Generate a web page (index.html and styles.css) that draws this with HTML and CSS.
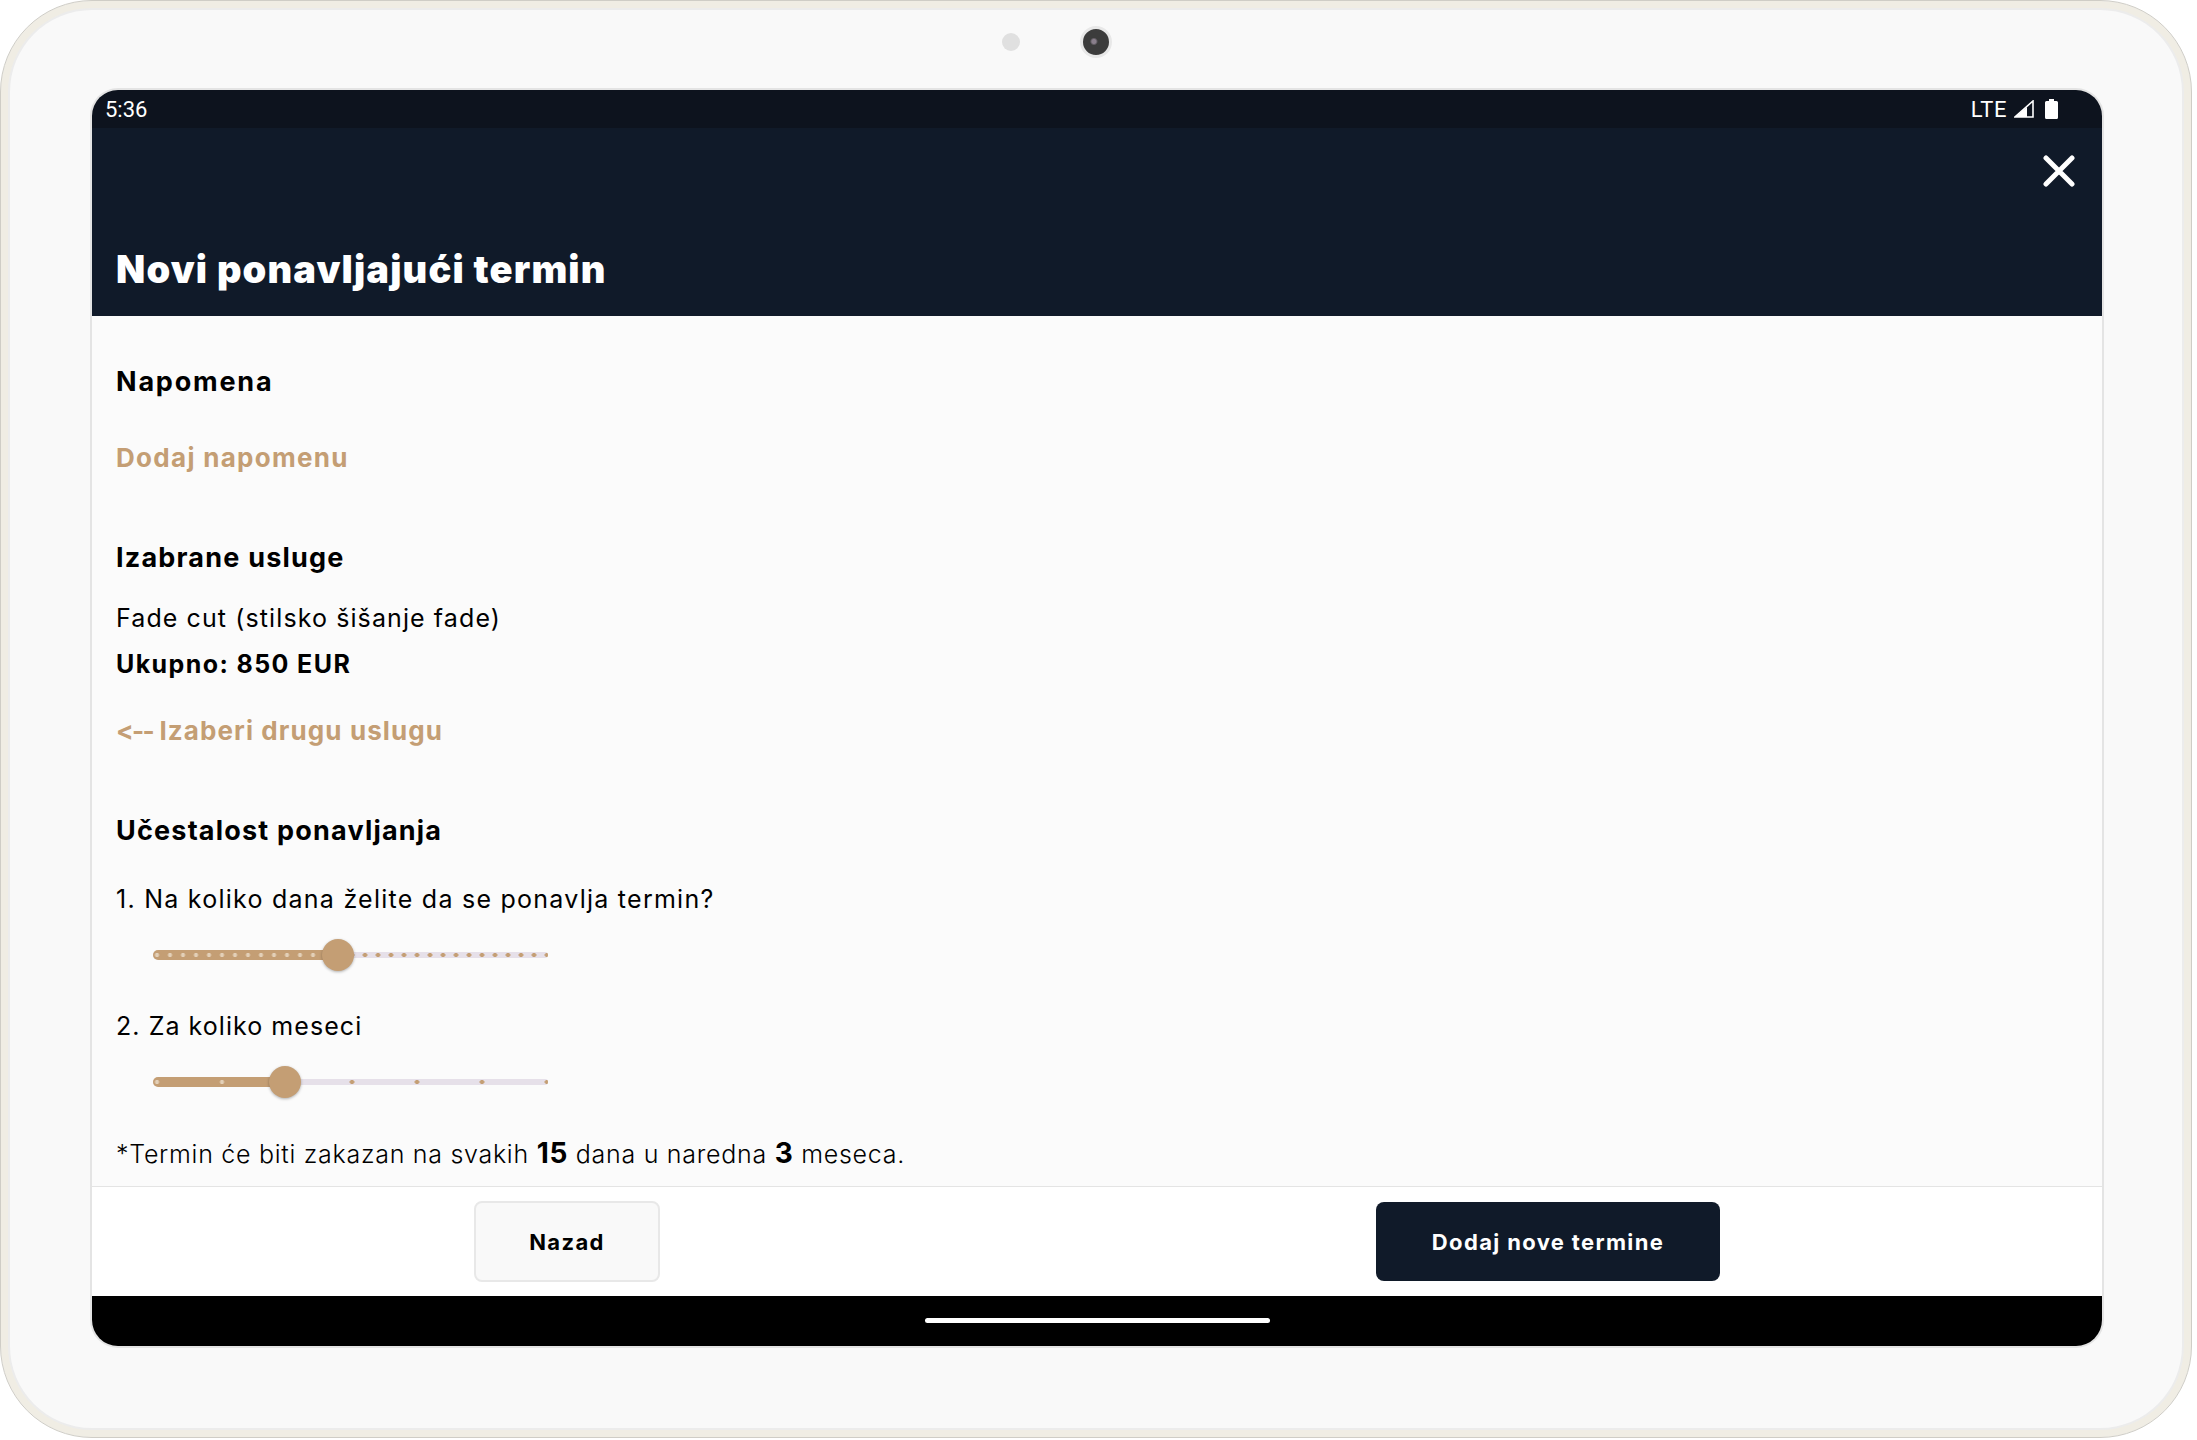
FILE: index.html
```html
<!DOCTYPE html>
<html lang="sr">
<head>
  <meta charset="UTF-8">
  <meta name="viewport" content="width=device-width, initial-scale=1.0">
  <title>Novi ponavljajući termin</title>
  <link rel="stylesheet" href="styles.css">
</head>
<body>
  <div class="device">
    <div class="cameras">
      <span class="sensor"></span>
      <span class="lens"></span>
    </div>
    <div class="screen">
      <div class="status-bar">
        <span class="clock">5:36</span>
        <div class="status-icons">
          <span class="lte">LTE</span>
          <svg class="signal" width="20" height="18" viewBox="0 0 20 18">
            <path d="M19 1v16H1z" fill="none" stroke="#fff" stroke-width="1.6"/>
            <path d="M13 7v10H1z" fill="#fff"/>
          </svg>
          <svg class="battery" width="13" height="20" viewBox="0 0 13 20">
            <path d="M4 0h5v2h2.500q1.500 0 1.500 1.500v15q0 1.500-1.500 1.500h-10q-1.500 0-1.500-1.500v-15q0-1.500 1.500-1.500h2.500z" fill="#fff"/>
          </svg>
        </div>
      </div>
      <header class="top-bar">
        <div class="close-row">
          <svg class="close" width="32" height="32" viewBox="0 0 32 32">
            <path d="M3 3l26 26M29 3l-26 26" stroke="#fff" stroke-width="5" stroke-linecap="round"/>
          </svg>
        </div>
        <h1 class="title">Novi ponavljajući termin</h1>
      </header>
      <main class="content">
        <h2 class="section-title first">Napomena</h2>
        <a class="link link-note">Dodaj napomenu</a>
        <h2 class="section-title">Izabrane usluge</h2>
        <p class="service">Fade cut (stilsko šišanje fade)</p>
        <p class="total">Ukupno: 850 EUR</p>
        <a class="link link-back"><span class="arrow">&lt;--</span> Izaberi drugu uslugu</a>
        <h2 class="section-title">Učestalost ponavljanja</h2>
        <p class="question q-first">1. Na koliko dana želite da se ponavlja termin?</p>
        <div class="slider slider-days">
          <div class="track-off"></div>
          <div class="track-on" style="width: 185px"></div>
          <span class="thumb" style="left: 185px"></span>
        </div>
        <p class="question">2. Za koliko meseci</p>
        <div class="slider slider-months">
          <div class="track-off"></div>
          <div class="track-on" style="width: 132px"></div>
          <span class="thumb" style="left: 132px"></span>
        </div>
        <p class="summary">*Termin će biti zakazan na svakih <strong>15</strong> dana u naredna <strong>3</strong> meseca.</p>
      </main>
      <footer class="actions">
        <button class="btn btn-back">Nazad</button>
        <button class="btn btn-add">Dodaj nove termine</button>
      </footer>
      <div class="nav-bar">
        <span class="home-pill"></span>
      </div>
    </div>
  </div>
</body>
</html>
```

FILE: styles.css
```css
* {
  margin: 0;
  padding: 0;
  box-sizing: border-box;
  font-family: Inter, "Liberation Sans", sans-serif;
  font-variant-ligatures: none;
  font-feature-settings: "calt" 0;
}

body {
  background-color: white;
}

.device {
  width: 2192px;
  height: 1438px;
  padding: 0 89px 91px 91px;
  display: flex;
  flex-direction: column;
  background-color: #f9f9f9;
  border: 1px solid #cfcdc6;
  border-radius: 92px;
  box-shadow: inset 0 0 0 7px #f0ede4, inset 0 0 0 9px #ececec;
}

.cameras {
  height: 89px;
  flex-shrink: 0;
  display: flex;
  align-items: center;
  padding: 0 0 7px 910px;
  gap: 60px;
}

.sensor {
  width: 18px;
  height: 18px;
  border-radius: 50%;
  background-color: #e0e0e0;
}

.lens {
  width: 32px;
  height: 32px;
  border-radius: 50%;
  background: radial-gradient(circle at 42% 48%, #8a7f8c 0 2px, #3c3c3c 4px 11px);
  border: 3px solid #e8e8e8;
}

.screen {
  flex: 1;
  display: flex;
  flex-direction: column;
  overflow: hidden;
  border-radius: 26px;
  background-color: #fbfbfb;
  box-shadow: 0 0 0 2px #e4e4e4;
}

.status-bar {
  height: 38px;
  flex-shrink: 0;
  display: flex;
  align-items: center;
  justify-content: space-between;
  padding: 0 44px 0 13px;
  background-color: #0d131e;
  color: white;
}

.clock, .lte {
  font-family: Roboto, sans-serif;
  font-size: 22px;
}

.lte {
  letter-spacing: 0.6px;
}

.status-icons {
  display: flex;
  align-items: center;
  gap: 7px;
}

.battery {
  margin-left: 4px;
}

.top-bar {
  height: 188px;
  flex-shrink: 0;
  padding: 0 24px;
  background-color: #101a29;
  color: white;
}

.close-row {
  display: flex;
  justify-content: flex-end;
  padding: 27px 3px 0 0;
}

.title {
  margin-top: 58px;
  font-size: 38px;
  line-height: 48px;
  font-weight: 900;
  letter-spacing: 1.15px;
}

.content {
  flex: 1;
  overflow: hidden;
  padding: 51px 24px 0;
  color: black;
}

.section-title {
  margin-top: 70px;
  font-size: 27px;
  line-height: 30px;
  font-weight: 700;
  letter-spacing: 1.2px;
}

.section-title.first {
  margin-top: 0;
  letter-spacing: 1.8px;
}

.link {
  display: block;
  font-size: 26px;
  line-height: 30px;
  font-weight: 700;
  letter-spacing: 1.3px;
  color: #c49e74;
}

.link-note {
  margin-top: 46px;
}

.link-back {
  margin-top: 37px;
  letter-spacing: 1.1px;
}

.arrow {
  letter-spacing: -1.6px;
  margin-right: -1px;
}

.service {
  margin-top: 30px;
  font-size: 25px;
  line-height: 30px;
  letter-spacing: 1.1px;
}

.total {
  margin-top: 16px;
  font-size: 25px;
  line-height: 30px;
  font-weight: 700;
  letter-spacing: 1.4px;
}

.question {
  margin-top: 40px;
  font-size: 25px;
  line-height: 30px;
  letter-spacing: 1.05px;
}

.question.q-first {
  margin-top: 38px;
  letter-spacing: 1.25px;
}

.slider {
  position: relative;
  width: 395px;
  height: 32px;
  margin: 25px 0 0 37px;
}

.track-off, .track-on {
  position: absolute;
  left: 0;
  top: 50%;
  transform: translateY(-50%);
  border-radius: 5px;
  background-repeat: repeat-x;
}

.track-off {
  width: 100%;
  height: 6px;
  background-color: #e6e0e9;
  background-image: radial-gradient(circle, #c49e74 0 2px, transparent 2.500px);
}

.track-on {
  height: 10px;
  background-color: #c49e74;
  background-image: radial-gradient(circle, #e3d0b8 0 1.800px, transparent 2.300px);
}

.slider-days .track-off, .slider-days .track-on {
  background-size: 13px 6px;
  background-position: -2.500px center;
}

.slider-months .track-off, .slider-months .track-on {
  background-size: 65px 6px;
  background-position: -28.500px center;
}

.thumb {
  position: absolute;
  top: 0;
  width: 32px;
  height: 32px;
  margin-left: -16px;
  border-radius: 50%;
  background-color: #c49e74;
  box-shadow: 0 1px 3px rgba(0, 0, 0, 0.3);
}

.summary {
  margin-top: 40px;
  font-size: 25px;
  line-height: 30px;
  font-weight: 300;
  letter-spacing: 0.72px;
}

.summary strong {
  font-size: 28px;
  font-weight: 700;
}

.actions {
  height: 110px;
  flex-shrink: 0;
  display: flex;
  align-items: center;
  gap: 716px;
  padding-left: 382px;
  background-color: white;
  border-top: 1px solid #e4e4e4;
}

.btn {
  border-radius: 8px;
  font-size: 22px;
  font-weight: 700;
  letter-spacing: 1.35px;
}

.btn-back {
  width: 186px;
  height: 81px;
  background-color: #f9f9f9;
  border: 2px solid #e8e8e8;
  color: black;
}

.btn-add {
  width: 344px;
  height: 79px;
  background-color: #101a29;
  border: none;
  color: white;
}

.nav-bar {
  height: 50px;
  flex-shrink: 0;
  display: flex;
  justify-content: center;
  padding-top: 22px;
  background-color: black;
}

.home-pill {
  width: 345px;
  height: 5px;
  border-radius: 3px;
  background-color: white;
}
```
